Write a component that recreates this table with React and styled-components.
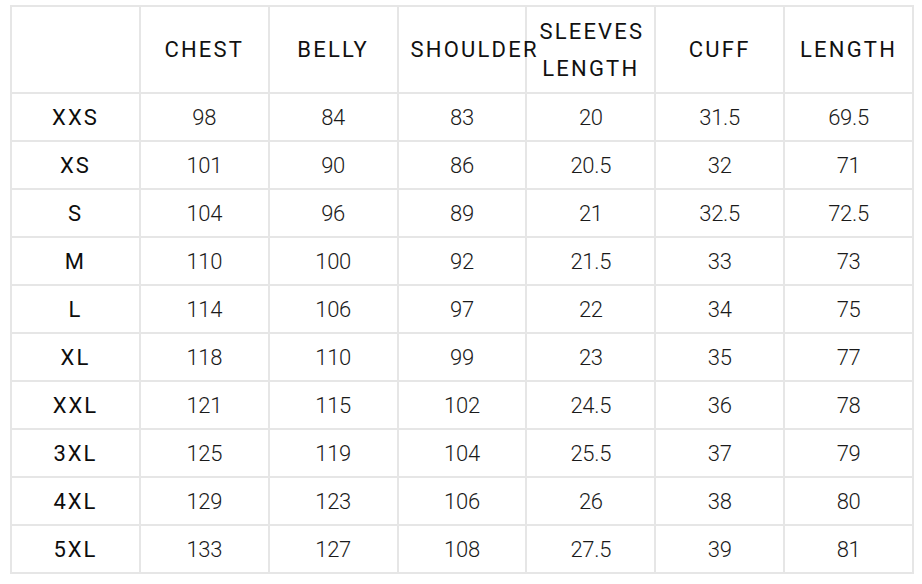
import styled, { createGlobalStyle } from "styled-components";

const GlobalStyle = createGlobalStyle`
  html, body {
    margin: 0;
    padding: 0;
    background: #ffffff;
  }
  body {
    font-family: Roboto, "Liberation Sans", sans-serif;
    color: #111111;
  }
`;

const Page = styled.div`
  padding: 5px 8px 0 10px;
`;

const SizeTable = styled.table`
  width: 904px;
  table-layout: fixed;
  border-collapse: collapse;
  border: 2px solid #e6e6e6;
`;

const HeadCell = styled.th`
  height: 85px;
  padding: 0 12px;
  border: 2px solid #e6e6e6;
  font-size: 22px;
  font-weight: 400;
  letter-spacing: 2.2px;
  line-height: 37px;
  text-align: center;
  vertical-align: middle;
  white-space: ${(p) => (p.$wrap ? "normal" : "nowrap")};
  color: #111111;
`;

const SizeCell = styled.td`
  height: 46px;
  padding: 0;
  border: 2px solid #e6e6e6;
  font-size: 22px;
  font-weight: 400;
  letter-spacing: 2px;
  text-align: center;
  vertical-align: middle;
  color: #0d0d0d;
`;

const ValueCell = styled.td`
  height: 46px;
  padding: 0;
  border: 2px solid #e6e6e6;
  font-size: 22px;
  font-weight: 300;
  letter-spacing: -0.3px;
  text-align: center;
  vertical-align: middle;
  color: #1a1a1a;
`;

const headers = ["CHEST", "BELLY", "SHOULDER", "SLEEVES LENGTH", "CUFF", "LENGTH"];

const rows = [
  ["XXS", "98", "84", "83", "20", "31.5", "69.5"],
  ["XS", "101", "90", "86", "20.5", "32", "71"],
  ["S", "104", "96", "89", "21", "32.5", "72.5"],
  ["M", "110", "100", "92", "21.5", "33", "73"],
  ["L", "114", "106", "97", "22", "34", "75"],
  ["XL", "118", "110", "99", "23", "35", "77"],
  ["XXL", "121", "115", "102", "24.5", "36", "78"],
  ["3XL", "125", "119", "104", "25.5", "37", "79"],
  ["4XL", "129", "123", "106", "26", "38", "80"],
  ["5XL", "133", "127", "108", "27.5", "39", "81"],
];

export default function App() {
  return (
    <>
      <GlobalStyle />
      <Page>
        <SizeTable>
          <thead>
            <tr>
              <HeadCell></HeadCell>
              {headers.map((h) => (
                <HeadCell key={h} $wrap={h.includes(" ")}>
                  {h}
                </HeadCell>
              ))}
            </tr>
          </thead>
          <tbody>
            {rows.map(([size, ...values]) => (
              <tr key={size}>
                <SizeCell>{size}</SizeCell>
                {values.map((v, i) => (
                  <ValueCell key={i}>{v}</ValueCell>
                ))}
              </tr>
            ))}
          </tbody>
        </SizeTable>
      </Page>
    </>
  );
}
